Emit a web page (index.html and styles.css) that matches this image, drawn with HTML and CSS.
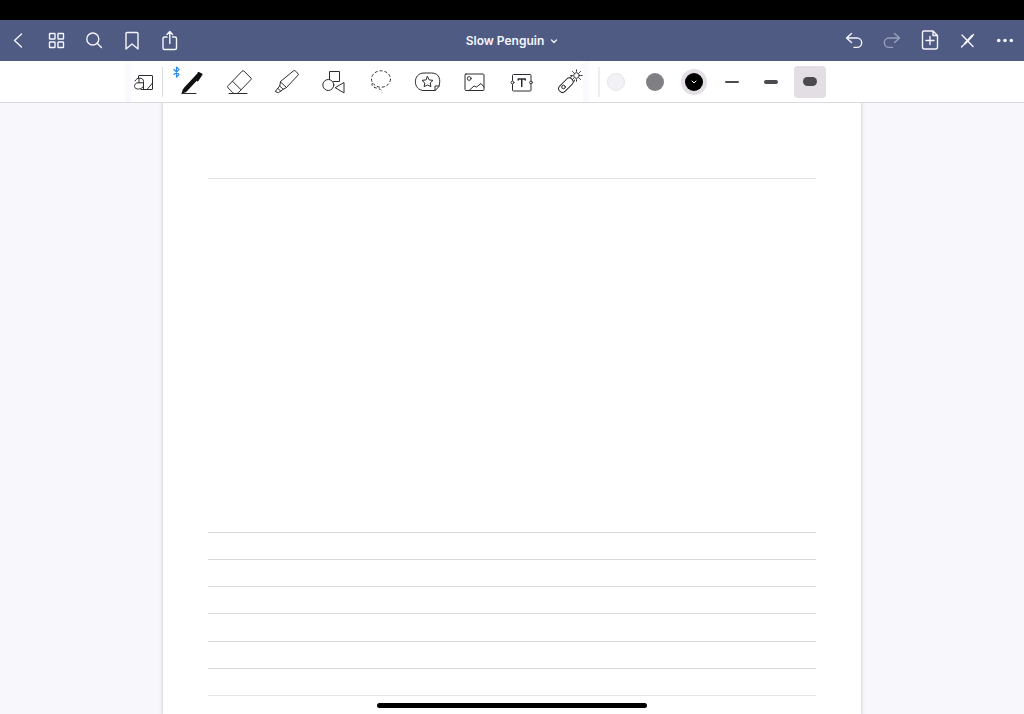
FILE: index.html
```html
<!DOCTYPE html>
<html lang="en">
<head>
<meta charset="utf-8">
<title>Slow Penguin</title>
<meta name="viewport" content="width=device-width, initial-scale=1">
<link rel="stylesheet" href="styles.css">
</head>
<body>
<div class="status-bar"></div>
<header class="nav">
  <div class="nav-group">
    <button class="nav-btn" aria-label="Back"><svg viewBox="0 0 24 24"><path d="M14.500 6 7.500 12.500l7 6.500"/></svg></button>
    <button class="nav-btn" aria-label="Thumbnails"><svg viewBox="0 0 24 24"><rect x="4.500" y="5.500" width="5.500" height="5.500" rx=".5"/><rect x="13" y="5.500" width="5.500" height="5.500" rx=".5"/><rect x="4.500" y="14" width="5.500" height="5.500" rx=".5"/><rect x="13" y="14" width="5.500" height="5.500" rx=".5"/></svg></button>
    <button class="nav-btn" aria-label="Search"><svg viewBox="0 0 24 24"><circle cx="9.800" cy="11" r="6"/><path d="m14.200 15.300 4.200 4.200"/></svg></button>
    <button class="nav-btn" aria-label="Bookmark"><svg viewBox="0 0 24 24"><path d="M5 21V5.500q0-1 1-1h10q1 0 1 1V21l-6-5z"/></svg></button>
    <button class="nav-btn" aria-label="Share"><svg viewBox="0 0 24 24"><path d="M8 9H5.500Q4 9 4 10.500V20q0 1.500 1.500 1.500h10.500Q17.500 21.500 17.500 20v-9.500Q17.500 9 16 9h-2.500M10.800 15.500V4M8 6.500l2.800-3 2.800 3"/></svg></button>
  </div>
  <button class="doc-title">Slow Penguin <svg viewBox="0 0 8 8"><path d="m1.500 3 2.500 2.500L6.500 3"/></svg></button>
  <div class="nav-group nav-end">
    <button class="nav-btn" aria-label="Undo"><svg viewBox="0 0 24 24"><path d="M10.500 5.500 5.500 10l5 4.500M5.500 10H16a4.700 4.700 0 0 1 0 9.400H13"/></svg></button>
    <button class="nav-btn" aria-label="Redo" disabled><svg viewBox="0 0 24 24"><path d="m15.500 5.500 5 4.500-5 4.500M20.500 10H10a4.700 4.700 0 0 0 0 9.400h3.500"/></svg></button>
    <button class="nav-btn" aria-label="Add page"><svg viewBox="0 0 24 24"><path d="M7 3h9l4.500 4.500V19q0 2-2 2h-11q-2 0-2-2V4.500Q5.500 3 7 3zM16 3v4.500h4.500M13 8.500v8M9 12.500h8"/></svg></button>
    <button class="nav-btn" aria-label="Pen mode"><svg viewBox="0 0 24 24"><path d="m7 7 11 11.500"/><path class="thick" d="m17 8-7 7.500"/><path d="m17.500 7.500 1-1M9 16.500l-2.500 2.500"/></svg></button>
    <button class="nav-btn" aria-label="More"><svg viewBox="0 0 24 24"><g class="dots"><circle cx="5.700" cy="12.500" r="1.800"/><circle cx="12" cy="12.500" r="1.800"/><circle cx="18.300" cy="12.500" r="1.800"/></g></svg></button>
  </div>
</header>

<div class="toolbar">
  <button class="tool tool-zoom" aria-label="Zoom window"><svg viewBox="0 0 31 31"><path d="M10.500 12V10q0-.5.5-.5h13q.5 0 .5.500v13q0 .5-.5.5H13M19 23.500l5.500-6.500M7 15c1-2 2.500-2.800 4.500-2.800 2.500 0 4 1 4 3.300v8M15.500 16.800H10c-4.500 0-4.500 6.200-.5 6.200 3 0 6-1 6-3.500M11 12.500v4.300"/></svg></button>
  <div class="tools">
    <button class="tool" aria-label="Pen"><svg viewBox="0 0 31 31"><g class="bluetooth"><path d="m-2 3.500 5 5-2.500 2.500V1L3 3.500l-5 5"/></g><path class="pen-body" d="M9.500 23.500 22.500 9.500"/><path class="pen-cap" d="m22.500 7 3 1.500M25.500 8.500l-4 6"/><path class="pen-tip" d="m5.500 27.800 1.500-5 3.500 3.200z"/><path d="M6 27.500h14"/></svg></button>
    <button class="tool" aria-label="Eraser"><svg viewBox="0 0 31 31"><path d="m19.300 5 q.8-.7 1.600 0l7 7q.8.8 0 1.600L15.500 26.500q-1 1-2 1h-2q-1 0-1.700-.8L5 21.800q-1-1 0-2zM9.500 15.200l8.500 8.500M6 27.500h18"/></svg></button>
    <button class="tool" aria-label="Highlighter"><svg viewBox="0 0 31 31"><path d="m23.500 4.800q.8-.8 1.600 0l2.800 2.600q.8.800.2 1.700L16.500 21.500l-6-5.500zM10.500 16l-.8 4 3.500 3.300 3.300-1.800M9.700 20l-4.500 5.500 3.300 1.200 4.700-3.400M8 22.500l2.500 2.500"/></svg></button>
    <button class="tool" aria-label="Shapes"><svg viewBox="0 0 31 31"><path d="M12.500 13.500v-8h10v10h-6"/><circle cx="11.300" cy="19" r="5.500"/><path d="m18.500 21.500 8.500-5v10z"/></svg></button>
    <button class="tool" aria-label="Lasso"><svg viewBox="0 0 31 31"><g class="dashed"><ellipse cx="17" cy="13" rx="9.500" ry="8.200"/><path d="M8.500 17c-1.500 2.500.5 4.500 4 5s5 2 5.500 4.500"/></g></svg></button>
    <button class="tool" aria-label="Stickers"><svg viewBox="0 0 31 31"><path d="M24 24.500H13C1.500 24.500 1.500 7 13 7h7.500c8 0 9.500 7 7.500 13zM24 24.500V20h4M16.500 10.500l1.700 3.400 3.800.5-2.800 2.600.7 3.700-3.400-1.800-3.400 1.800.7-3.700-2.800-2.600 3.800-.5z"/></svg></button>
    <button class="tool" aria-label="Image"><svg viewBox="0 0 31 31"><rect x="7" y="8" width="19" height="16.500" rx="1"/><circle cx="11.200" cy="12.500" r="1.900"/><path d="m11 24.500 5-4.500 2.500 1 4.500-3.500 3 3.500"/></svg></button>
    <button class="tool" aria-label="Text"><svg viewBox="0 0 31 31"><path d="M7.500 14.500v-5q0-1 1-1H25q1 0 1 1v5M7.500 18.500V24q0 1 1 1H25q1 0 1-1v-5.500"/><circle cx="7.500" cy="16.500" r="1.400"/><circle cx="26" cy="16.500" r="1.400"/><path class="letter" d="M13.200 14v-1H20.300v1M16.750 13v7.500"/></svg></button>
    <button class="tool" aria-label="Laser pointer"><svg viewBox="0 0 31 31"><rect x="5" y="16" width="17" height="7.500" rx="3.500" transform="rotate(-45 13 19)"/><circle cx="11.500" cy="21" r="1.800"/><path d="m18 11.500 2-1M22 15.500l.5-1.500"/><circle cx="24.500" cy="9.500" r="2.800"/><path d="M24.500 3.800v1.500M24.500 13.700v1.500M18.800 9.500h1.500M28.700 9.500h1.500M20.500 5.500l1 1M27.500 12.500l1 1M28.500 5.500l-1 1M21.500 12.500l-1 1"/></svg></button>
  </div>
  <div class="swatches">
    <button class="swatch swatch-light" aria-label="White"></button>
    <button class="swatch swatch-gray" aria-label="Gray"></button>
    <button class="swatch swatch-black" aria-label="Black, selected"><svg viewBox="0 0 8 8"><path d="m2 3 2 2 2-2"/></svg></button>
  </div>
  <div class="strokes">
    <button class="stroke" aria-label="Thin"><span class="line thin"></span></button>
    <button class="stroke" aria-label="Medium"><span class="line medium"></span></button>
    <button class="stroke selected" aria-label="Thick"><span class="line wide"></span></button>
  </div>
</div>

<main class="canvas">
  <div class="page">
    <div class="title-rule"></div>
    <div class="ruled">
      <div class="rule"></div><div class="rule"></div><div class="rule"></div><div class="rule"></div><div class="rule"></div><div class="rule"></div><div class="rule faint"></div>
    </div>
  </div>
</main>
<div class="home-indicator"></div>
</body>
</html>
```
FILE: styles.css
```css
* {
  box-sizing: border-box;
}

body {
  margin: 0;
  min-height: 100vh;
  display: flex;
  flex-direction: column;
  font-family: Inter, "Liberation Sans", sans-serif;
  background: #f8f7fc;
}

button {
  padding: 0;
  border: 0;
  background: none;
  font: inherit;
  color: inherit;
}

svg {
  display: block;
  overflow: visible;
  fill: none;
  stroke: currentColor;
  stroke-linecap: round;
  stroke-linejoin: round;
}

.status-bar {
  height: 20px;
  background: #000;
}

.nav {
  display: grid;
  grid-template-columns: 1fr auto 1fr;
  height: 41px;
  color: #f4f5fc;
  background: #505b83;
}

.nav-group {
  display: flex;
}

.nav-end {
  justify-content: flex-end;
}

.nav-btn {
  display: flex;
  justify-content: center;
  width: 38px;
  padding-top: 8px;
}

.nav-btn svg {
  width: 24px;
  height: 24px;
  stroke-width: 1.4;
}

.nav-btn:disabled {
  color: #99a0bc;
}

.nav-btn .thick {
  stroke-width: 2.2;
}

.dots {
  fill: currentColor;
  stroke: none;
}

.doc-title {
  display: flex;
  align-items: center;
  gap: 6px;
  font-size: 12px;
  font-weight: 600;
}

.doc-title svg {
  width: 8px;
  height: 8px;
  stroke-width: 1.3;
}

.toolbar {
  display: flex;
  align-items: center;
  height: 42px;
  padding-left: 125px;
  background: #fff;
  border-bottom: 1px solid #dad9de;
}

.tool {
  display: flex;
  align-items: center;
  justify-content: center;
  width: 47px;
  height: 41px;
  color: #2c2c30;
}

.tool svg {
  width: 31px;
  height: 31px;
  stroke-width: 1;
}

.tool-zoom {
  width: 37px;
  background: linear-gradient(90deg, #faf9fd 6px, #fff 6px);
}

.tools {
  display: flex;
  align-items: center;
  padding-right: 7px;
}

.tools::before,
.swatches::before {
  content: "";
  width: 1px;
  height: 30px;
  margin-right: 5px;
  background: #dcdbdf;
}

.tools .tool:last-child {
  background: linear-gradient(90deg, transparent 39px, #faf9fd 39px, #faf9fd 45px, transparent 45px);
}

.bluetooth {
  stroke: #2b8ceb;
  stroke-width: 1.2;
}

.pen-body {
  stroke: #111;
  stroke-width: 4.6;
}

.pen-cap {
  stroke: #111;
  stroke-width: 2;
}

.pen-tip {
  fill: #111;
  stroke: none;
}

.dashed {
  stroke-dasharray: 3 2;
  stroke-linecap: butt;
}

.letter {
  stroke-width: 1.5;
}

.swatches {
  display: flex;
  align-items: center;
  gap: 21px;
  padding-right: 13px;
}

.swatches::before {
  width: 2px;
  margin-right: -14px;
  background: #efedf1;
}

.swatch {
  display: flex;
  align-items: center;
  justify-content: center;
  width: 18px;
  height: 18px;
  border-radius: 50%;
}

.swatch-light {
  background: #f2f1f5;
  border: 1px solid #e5e4e8;
}

.swatch-gray {
  background: #808084;
}

.swatch-black {
  color: #fff;
  background: #000;
  box-shadow: 0 0 0 4px #e3dfe5;
}

.swatch-black svg {
  width: 8px;
  height: 8px;
}

.strokes {
  display: flex;
  gap: 7px;
}

.stroke {
  display: flex;
  align-items: center;
  justify-content: center;
  width: 32px;
  height: 32px;
  border-radius: 4px;
}

.stroke.selected {
  background: #e3dde4;
}

.line {
  width: 14px;
  border-radius: 5px;
  background: #4c4a4f;
}

.thin {
  height: 2px;
}

.medium {
  height: 4px;
}

.wide {
  height: 9px;
}

.canvas {
  flex: 1;
  display: flex;
  padding: 0 163px;
}

.page {
  flex: 1;
  padding: 75px 45px 18px;
  background: #fff;
  box-shadow: 0 0 3px 1px #d6d2d8;
  clip-path: inset(0 -6px);
}

.title-rule,
.rule {
  height: 1px;
  background: #d9d9dc;
}

.title-rule {
  margin-bottom: 353px;
  background: #e2e2e7;
}

.ruled {
  display: flex;
  flex-direction: column;
  justify-content: space-between;
  height: 164px;
}

.rule.faint {
  background: #e6e6e8;
}

.home-indicator {
  position: fixed;
  bottom: 6px;
  left: 50%;
  width: 270px;
  height: 5px;
  margin-left: -135px;
  border-radius: 3px;
  background: #000;
}
```
